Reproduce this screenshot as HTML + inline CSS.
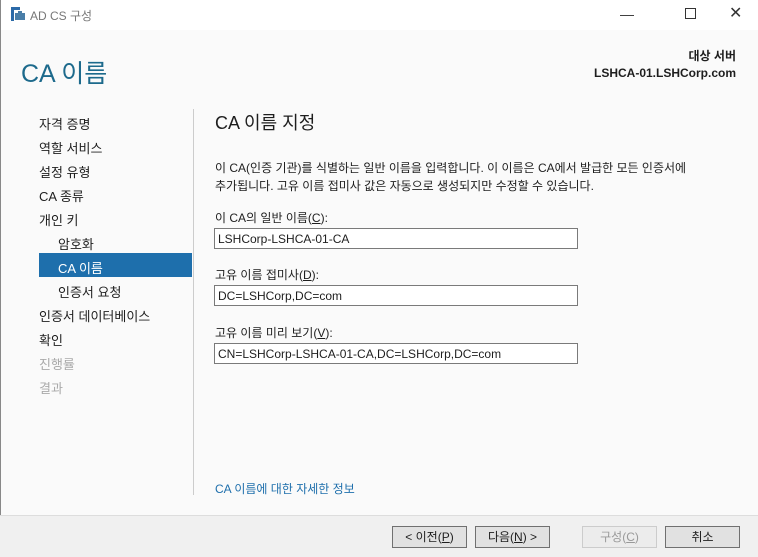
<!DOCTYPE html><html><head><meta charset="utf-8"><style>
body{margin:0;width:758px;height:556px;overflow:hidden;background:#fafafa;font-family:"Liberation Sans","Noto Sans CJK KR",sans-serif;position:relative;font-size:12px;color:#1e1e1e}
.a{position:absolute;white-space:nowrap}
.tb{position:absolute;left:0;top:0;width:758px;height:30px;background:#fff}
.nav{font-size:13px;color:#1e1e1e}
.in{position:absolute;left:214px;width:364px;height:21px;border:1px solid #7a7a7a;background:#fff;font-size:12px;line-height:20px;padding-left:3px;box-sizing:border-box}
.btn{position:absolute;top:526px;width:75px;height:22px;border:1px solid #707070;background:#e1e1e1;box-sizing:border-box;text-align:center;line-height:20px;font-size:12px}
u{text-decoration:underline}
</style></head><body>
<div class="tb"></div>
<div style="position:absolute;left:0;top:0;width:1px;height:556px;background:#888"></div>
<svg class="a" style="left:10px;top:6px" width="16" height="16"><rect x="1" y="1" width="3" height="14" fill="#2b6aa8"/><rect x="1" y="1" width="9" height="3" fill="#2b6aa8"/><rect x="5" y="7" width="10" height="7" fill="#4a7ea8"/><rect x="8" y="5" width="4" height="2" fill="#4a7ea8"/></svg>
<div class="a" style="left:30px;top:7px;color:#777;font-size:12px">AD CS 구성</div>
<div class="a" style="left:620px;top:6px;font-size:14px;color:#333">—</div>
<div class="a" style="left:685px;top:8px;width:9px;height:9px;border:1px solid #333"></div>
<div class="a" style="left:729px;top:3px;font-size:16px;color:#333">✕</div>
<div class="a" style="left:21px;top:54px;font-size:25px;color:#1d6a8c">CA 이름</div>
<div class="a" style="right:22px;top:47px;font-weight:bold;font-size:12px;text-align:right">대상 서버</div>
<div class="a" style="right:22px;top:66px;font-weight:bold;font-size:12px;text-align:right">LSHCA-01.LSHCorp.com</div>
<div class="a nav" style="left:39px;top:114px">자격 증명</div>
<div class="a nav" style="left:39px;top:138px">역할 서비스</div>
<div class="a nav" style="left:39px;top:162px">설정 유형</div>
<div class="a nav" style="left:39px;top:186px">CA 종류</div>
<div class="a nav" style="left:39px;top:210px">개인 키</div>
<div class="a nav" style="left:58px;top:234px">암호화</div>
<div class="a" style="left:39px;top:253px;width:153px;height:24px;background:#1e6fac"></div>
<div class="a nav" style="left:58px;top:258px;color:#fff">CA 이름</div>
<div class="a nav" style="left:58px;top:282px">인증서 요청</div>
<div class="a nav" style="left:39px;top:306px">인증서 데이터베이스</div>
<div class="a nav" style="left:39px;top:330px">확인</div>
<div class="a nav" style="left:39px;top:354px;color:#aaa">진행률</div>
<div class="a nav" style="left:39px;top:378px;color:#aaa">결과</div>
<div class="a" style="left:193px;top:109px;width:1px;height:386px;background:#ccc"></div>
<div class="a" style="left:215px;top:109px;font-size:18px;color:#1e1e1e">CA 이름 지정</div>
<div class="a" style="left:215px;top:159px">이 CA(인증 기관)를 식별하는 일반 이름을 입력합니다. 이 이름은 CA에서 발급한 모든 인증서에</div>
<div class="a" style="left:215px;top:177px">추가됩니다. 고유 이름 접미사 값은 자동으로 생성되지만 수정할 수 있습니다.</div>
<div class="a" style="left:215px;top:209px">이 CA의 일반 이름(<u>C</u>):</div>
<div class="in" style="top:228px">LSHCorp-LSHCA-01-CA</div>
<div class="a" style="left:215px;top:266px">고유 이름 접미사(<u>D</u>):</div>
<div class="in" style="top:285px">DC=LSHCorp,DC=com</div>
<div class="a" style="left:215px;top:324px">고유 이름 미리 보기(<u>V</u>):</div>
<div class="in" style="top:343px">CN=LSHCorp-LSHCA-01-CA,DC=LSHCorp,DC=com</div>
<div class="a" style="left:215px;top:480px;color:#1e6fac">CA 이름에 대한 자세한 정보</div>
<div class="a" style="left:0;top:515px;width:758px;height:41px;background:#f0f0f0;border-top:1px solid #ddd"></div>
<div class="btn" style="left:392px">&lt; 이전(<u>P</u>)</div>
<div class="btn" style="left:475px">다음(<u>N</u>) &gt;</div>
<div class="btn" style="left:582px;color:#999;border-color:#ccc;background:#ececec">구성(<u>C</u>)</div>
<div class="btn" style="left:665px">취소</div>
</body></html>
